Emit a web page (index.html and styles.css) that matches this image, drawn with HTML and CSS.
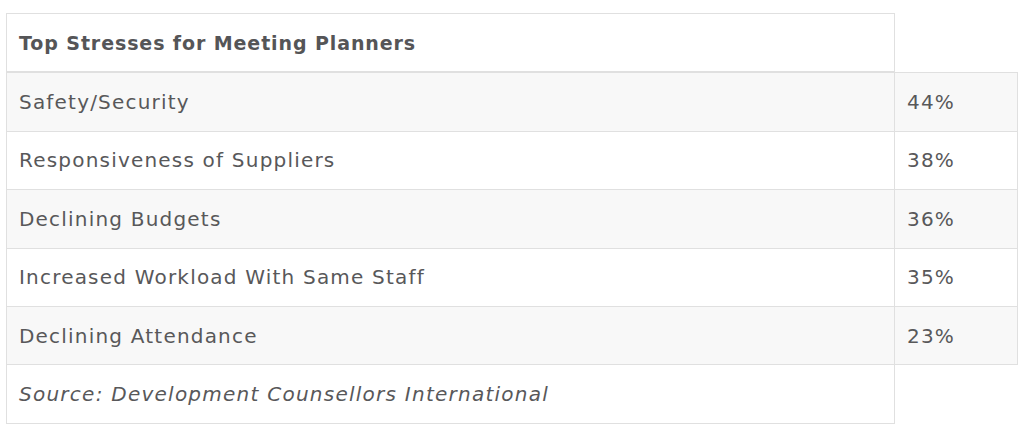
FILE: index.html
```html
<!DOCTYPE html>
<html lang="en">
<head>
<meta charset="utf-8">
<title>Top Stresses for Meeting Planners</title>
<link rel="stylesheet" href="styles.css">
</head>
<body>
<table class="stress-table">
  <colgroup>
    <col class="col-label">
    <col class="col-value">
  </colgroup>
  <thead>
    <tr class="head-row">
      <th class="label">Top Stresses for Meeting Planners</th>
      <th class="empty"></th>
    </tr>
  </thead>
  <tbody>
    <tr class="odd"><td class="label">Safety/Security</td><td class="value">44%</td></tr>
    <tr><td class="label">Responsiveness of Suppliers</td><td class="value">38%</td></tr>
    <tr class="odd"><td class="label">Declining Budgets</td><td class="value">36%</td></tr>
    <tr><td class="label">Increased Workload With Same Staff</td><td class="value">35%</td></tr>
    <tr class="odd"><td class="label">Declining Attendance</td><td class="value">23%</td></tr>
  </tbody>
  <tfoot>
    <tr><td class="label source">Source: Development Counsellors International</td><td class="empty"></td></tr>
  </tfoot>
</table>
</body>
</html>
```
FILE: styles.css
```css
html, body {
  margin: 0;
  padding: 0;
  background: #ffffff;
}

body {
  padding: 13px 0 0 6px;
  font-family: "DejaVu Sans", "Liberation Sans", sans-serif;
  color: #58585a;
}

.stress-table {
  border-collapse: collapse;
  width: 1011px;
  table-layout: fixed;
}

.col-label {
  width: 888px;
}

.col-value {
  width: 123px;
}

.stress-table th,
.stress-table td {
  border: 1px solid #e0e0e0;
  padding: 0 12px;
  height: 57.4px;
  text-align: left;
  vertical-align: middle;
  font-size: 20px;
  font-weight: normal;
  letter-spacing: 1.2px;
  white-space: nowrap;
}

.stress-table th.label {
  font-weight: bold;
  font-size: 19px;
  letter-spacing: 0.9px;
  border-bottom: 2px solid #e0e0e0;
  color: #555557;
}

.stress-table .empty {
  border: none;
}

.stress-table tr.odd td {
  background: #f8f8f8;
}

.stress-table .source {
  font-style: italic;
  letter-spacing: 1.25px;
}
```
